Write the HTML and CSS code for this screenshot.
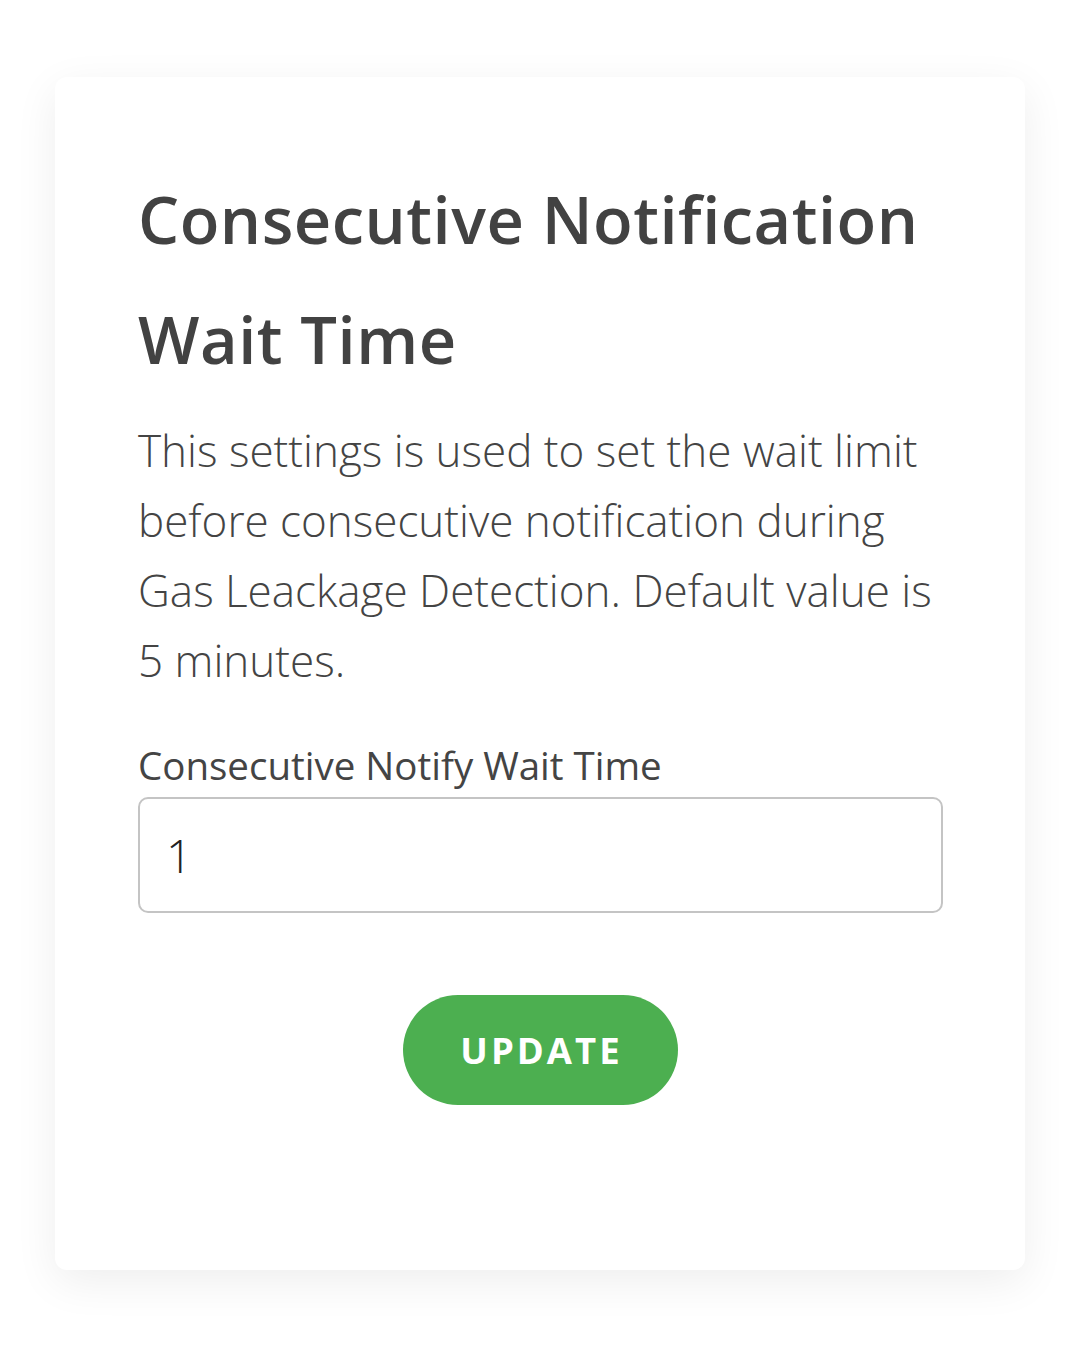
FILE: index.html
```html
<!DOCTYPE html>
<html>
<head>
<meta charset="utf-8">
<link rel="stylesheet" href="styles.css">
</head>
<body>
<div class="page">
  <div class="card">
    <h1 class="title">Consecutive Notification Wait Time</h1>
    <p class="desc">This settings is used to set the wait limit before consecutive notification during Gas Leackage Detection. Default value is 5 minutes.</p>
    <label class="label" for="wait">Consecutive Notify Wait Time</label>
    <div class="input" id="wait">1</div>
    <div class="actions">
      <button class="btn">UPDATE</button>
    </div>
  </div>
</div>
</body>
</html>
```

FILE: styles.css
```css
* { box-sizing: border-box; }
html, body { margin: 0; padding: 0; background: #ffffff; }
body { font-family: "Open Sans", "Noto Sans", sans-serif; color: #444444; }
.page { padding: 77px 55px 81px 55px; }
.card {
  background: #ffffff;
  border-radius: 12px;
  box-shadow: 0 12px 44px rgba(0, 0, 0, 0.07);
  padding: 82px 82px 165px 83px;
  height: 1193px;
}
.title {
  margin: 0;
  font-size: 65px;
  font-weight: 600;
  line-height: 120px;
  color: #424242;
  letter-spacing: 0.5px;
}
.desc {
  margin: 16px 0 0 0;
  font-size: 44px;
  font-weight: 300;
  line-height: 70px;
  color: #444444;
}
.label {
  display: block;
  margin-top: 44px;
  font-size: 38.5px;
  line-height: 53px;
  color: #444444;
}
.input {
  margin-top: 5px;
  height: 116px;
  border: 2px solid #c4c4c4;
  border-radius: 10px;
  padding: 0 26px;
  display: flex;
  align-items: center;
  font-size: 46px;
  font-weight: 300;
  color: #222222;
}
.actions {
  display: flex;
  justify-content: center;
  margin-top: 82px;
}
.btn {
  width: 275px;
  height: 110px;
  border: none;
  border-radius: 55px;
  background: #4caf50;
  color: #ffffff;
  font-family: "Open Sans", "Noto Sans", sans-serif;
  font-size: 36.5px;
  font-weight: 700;
  letter-spacing: 3px;
  padding: 0 0 0 2px;
}
```
